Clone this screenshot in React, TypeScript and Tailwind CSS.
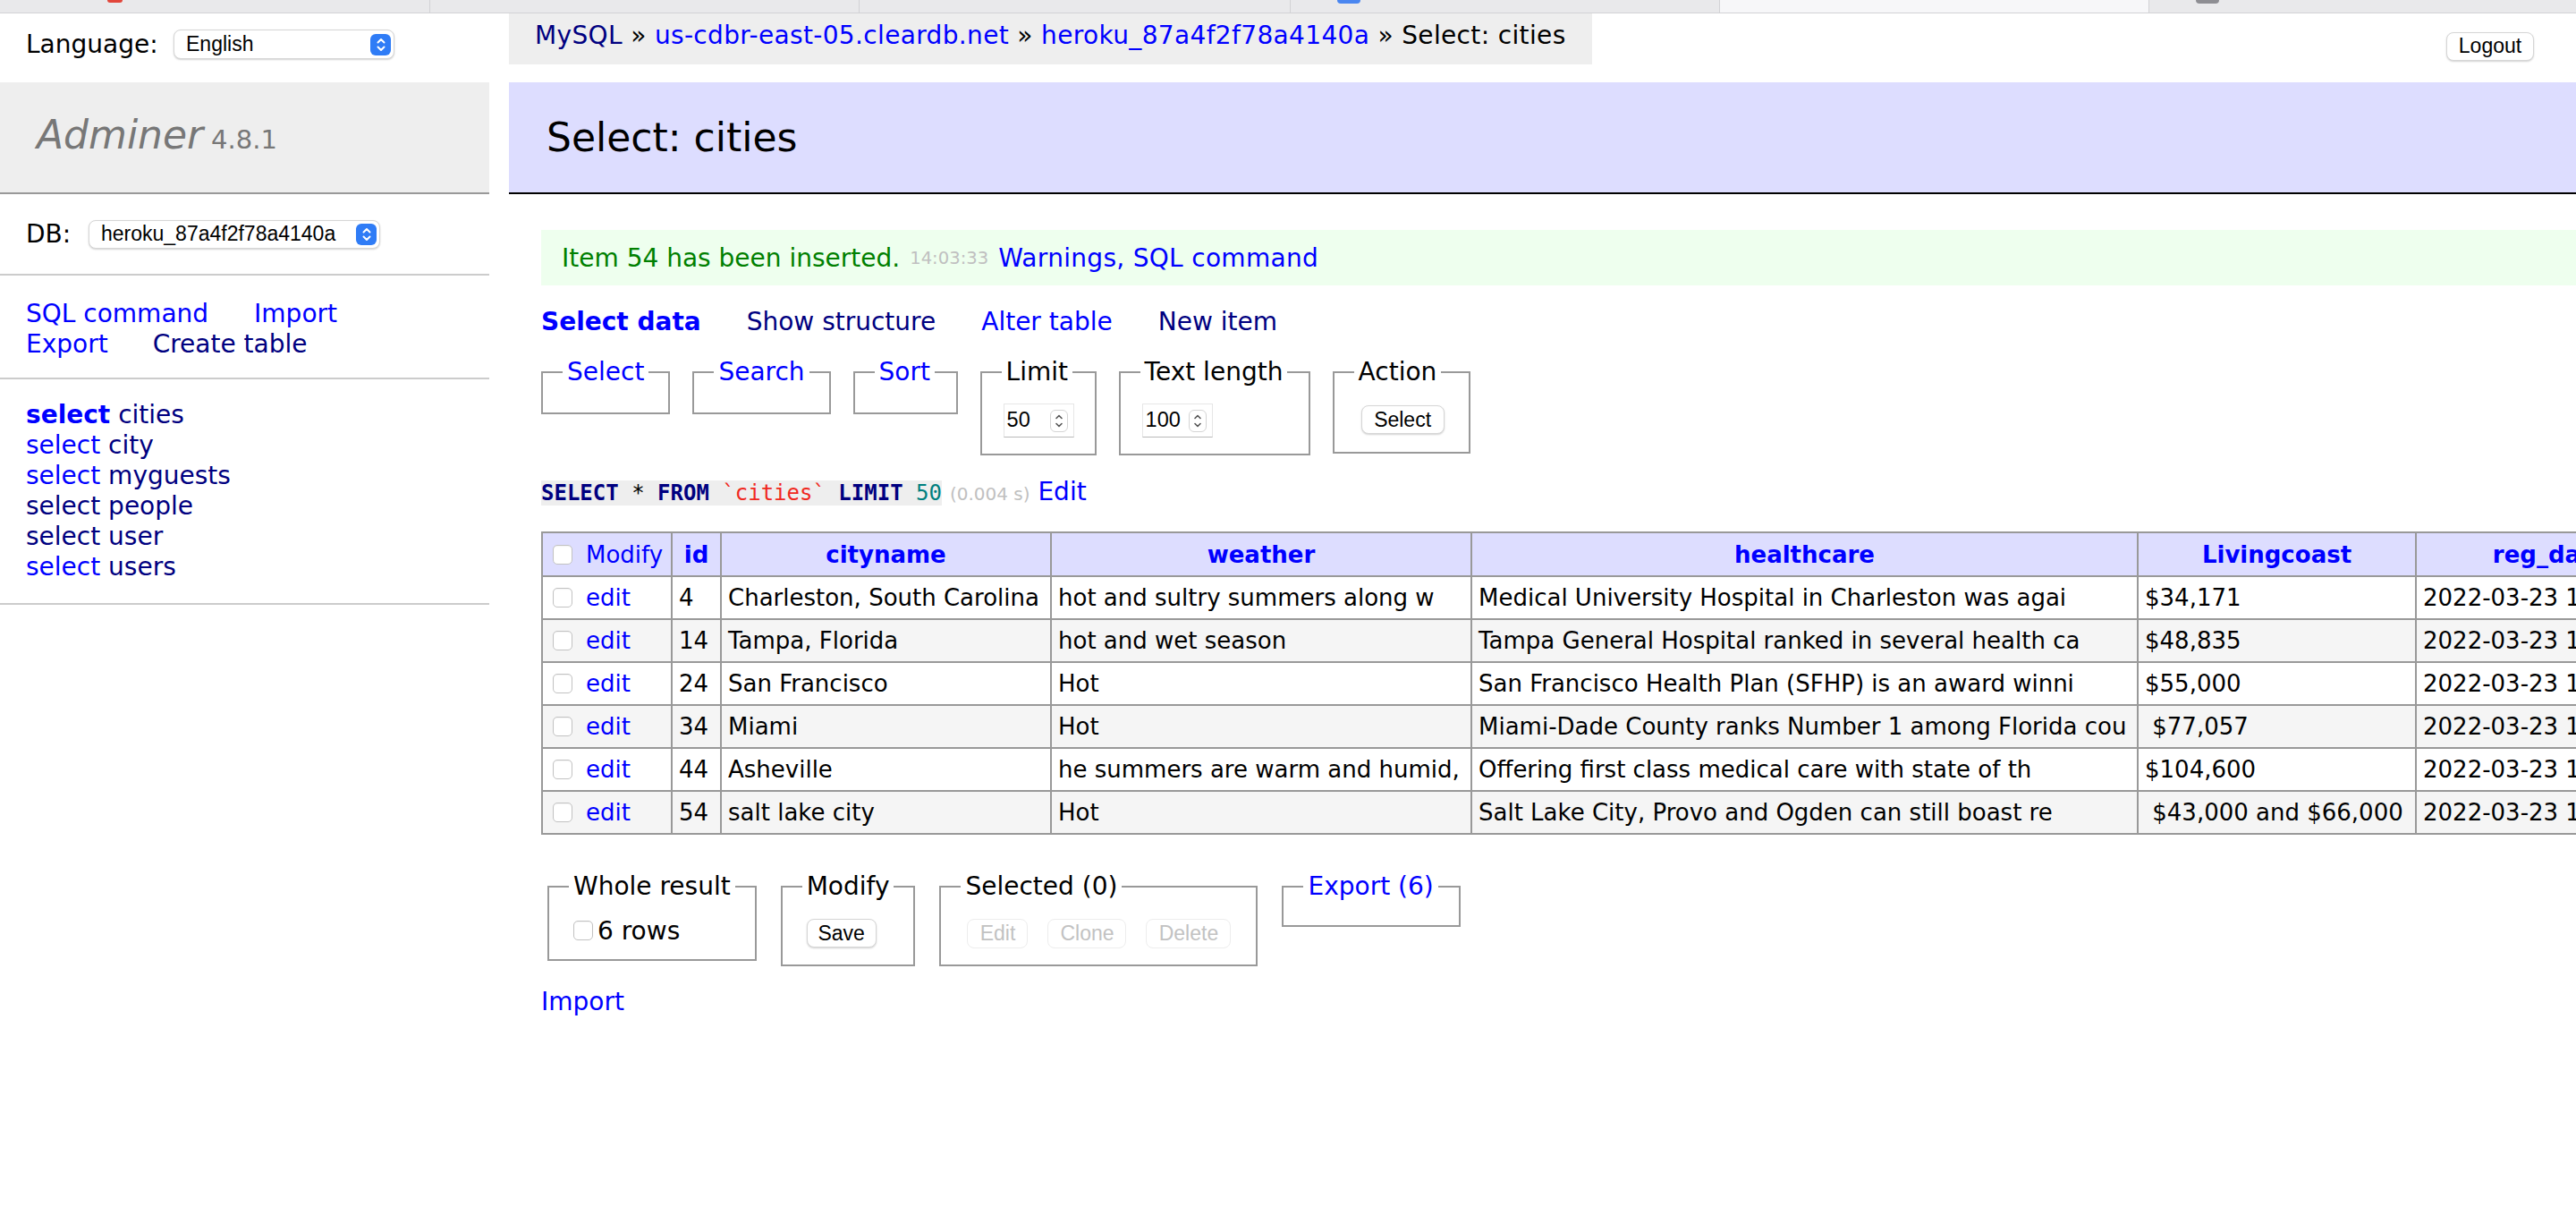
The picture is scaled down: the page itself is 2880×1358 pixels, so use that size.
import type { ReactNode } from 'react';

const rows: string[][] = [
  ['4', 'Charleston, South Carolina', 'hot and sultry summers along w', 'Medical University Hospital in Charleston was agai', '$34,171'],
  ['14', 'Tampa, Florida', 'hot and wet season', 'Tampa General Hospital ranked in several health ca', '$48,835'],
  ['24', 'San Francisco', 'Hot', 'San Francisco Health Plan (SFHP) is an award winni', '$55,000'],
  ['34', 'Miami', 'Hot', 'Miami-Dade County ranks Number 1 among Florida cou', ' $77,057'],
  ['44', 'Asheville', 'he summers are warm and humid,', 'Offering first class medical care with state of th', '$104,600'],
  ['54', 'salt lake city', 'Hot', 'Salt Lake City, Provo and Ogden can still boast re', ' $43,000 and $66,000'],
];

const tables = [
  { name: 'cities', active: true, linkVisited: false },
  { name: 'city', active: false, linkVisited: false },
  { name: 'myguests', active: false, linkVisited: false },
  { name: 'people', active: false, linkVisited: true },
  { name: 'user', active: false, linkVisited: true },
  { name: 'users', active: false, linkVisited: false },
];

function Checkbox({ className = '' }: { className?: string }) {
  return (
    <span
      className={`inline-block h-[22px] w-[22px] shrink-0 rounded-[5px] border border-[#c2c2c2] bg-white shadow-[inset_0_1px_1px_rgba(0,0,0,0.05)] ${className}`}
    />
  );
}

function MacSelect({ value, className }: { value: string; className: string }) {
  return (
    <div
      className={`flex items-center justify-between rounded-[8px] border border-[#d6d6d6] bg-white pl-[13px] pr-[3px] font-['Liberation_Sans',Arial,sans-serif] text-[23px] leading-none text-black shadow-[0_1px_2px_rgba(0,0,0,0.18)] ${className}`}
    >
      <span>{value}</span>
      <span className="flex h-[24px] w-[23px] items-center justify-center rounded-[6px] bg-[#2f7cf6]">
        <svg width="12" height="18" viewBox="0 0 12 18" fill="none" stroke="white" strokeWidth="2" strokeLinecap="round" strokeLinejoin="round">
          <path d="M2.5 6.5 6 3l3.5 3.5" />
          <path d="M2.5 11.5 6 15l3.5-3.5" />
        </svg>
      </span>
    </div>
  );
}

function MacButton({ children, className = '', disabled = false }: { children: ReactNode; className?: string; disabled?: boolean }) {
  return (
    <span
      className={`inline-flex items-center justify-center rounded-[8px] border bg-white font-['Liberation_Sans',Arial,sans-serif] text-[23px] leading-none ${
        disabled ? 'border-[#ededed] text-[#c2c2c2]' : 'border-[#d6d6d6] text-black shadow-[0_1px_2px_rgba(0,0,0,0.18)]'
      } ${className}`}
    >
      {children}
    </span>
  );
}

function NumberInput({ value }: { value: string }) {
  return (
    <div className="flex h-[38px] w-[79px] items-center border border-[#e6e6e6] border-b-[#b9b9b9] bg-white pl-[3px] pr-[6px] font-['Liberation_Sans',Arial,sans-serif] text-[23.5px] leading-none">
      <span>{value}</span>
      <span className="ml-auto flex h-[25px] w-[20px] items-center justify-center rounded-[6px] border border-[#d4d4d4] bg-white">
        <svg width="10" height="17" viewBox="0 0 10 17" fill="none" stroke="#555" strokeWidth="1.6" strokeLinecap="round" strokeLinejoin="round">
          <path d="M2 5.5 5 2.5l3 3" />
          <path d="M2 11.5 5 14.5l3-3" />
        </svg>
      </span>
    </div>
  );
}

function Box({ legend, legendClass = 'text-black', className, children }: { legend: string; legendClass?: string; className: string; children?: ReactNode }) {
  return (
    <fieldset className={`shrink-0 border-2 border-[#999] px-[22px] pt-[14px] ${className}`}>
      <legend className={`whitespace-nowrap px-[5px] leading-[35px] ${legendClass}`}>{legend}</legend>
      {children}
    </fieldset>
  );
}

function TabStrip() {
  return (
    <div className="flex h-[15px] border-b border-[#d2d2d5] bg-[#e9e9eb]">
      <div className="w-[481px] border-r border-[#d2d2d5] pl-[120px]">
        <span className="block h-[3px] w-[17px] rounded-b-[4px] bg-[#e2463b]" />
      </div>
      <div className="w-[480px] border-r border-[#d2d2d5]" />
      <div className="w-[482px] border-r border-[#d2d2d5]" />
      <div className="w-[480px] border-r border-[#d2d2d5] pl-[52px]">
        <span className="block h-[4px] w-[26px] rounded-b-[6px] bg-[#4a86f0]" />
      </div>
      <div className="w-[480px] border-r border-[#d2d2d5] bg-[#f7f7f9]" />
      <div className="flex-1 pl-[52px]">
        <span className="block h-[4px] w-[26px] rounded-b-[6px] bg-[#8e8e93]" />
      </div>
    </div>
  );
}

function Sidebar() {
  return (
    <aside className="w-[547px] shrink-0">
      {/* Language */}
      <div className="flex h-[77px] items-start pl-[29px] pt-[18px]">
        <span className="w-[165px] leading-[33px]">Language:</span>
        <MacSelect value="English" className="h-[33px] w-[247px]" />
      </div>

      {/* Logo */}
      <div className="flex h-[125px] items-center border-b-2 border-[#999] bg-[#eee] pl-[41px]">
        <div className="leading-[54px] text-[#777]">
          <span className="text-[44px] italic">Adminer</span> <span className="text-[29px]">4.8.1</span>
        </div>
      </div>

      {/* DB */}
      <div className="flex h-[91px] items-center border-b-2 border-[#ccc] px-[29px]">
        <span className="w-[70px]">DB:</span>
        <MacSelect value="heroku_87a4f2f78a4140a" className="h-[32px] w-[326px]" />
      </div>

      {/* Links */}
      <div className="border-b-2 border-[#ccc] px-[29px] pb-[20px] pt-[26px] leading-[34px]">
        <div className="flex gap-[51px]">
          <span className="text-[#0000ff]">SQL command</span>
          <span className="text-[#0000ff]">Import</span>
        </div>
        <div className="flex gap-[50px]">
          <span className="text-[#0000ff]">Export</span>
          <span className="text-[#000080]">Create table</span>
        </div>
      </div>

      {/* Tables */}
      <ul className="border-b-2 border-[#ccc] px-[29px] py-[23px] leading-[34px]">
        {tables.map(t => (
          <li key={t.name} className="whitespace-nowrap">
            <span className={`${t.active ? 'font-bold' : ''} ${t.linkVisited ? 'text-[#000080]' : 'text-[#0000ff]'}`}>select</span>{' '}
            <span className="text-[#000080]">{t.name}</span>
          </li>
        ))}
      </ul>
    </aside>
  );
}

function DataTable() {
  const cell = 'border-2 border-[#999] px-[7px] whitespace-pre overflow-hidden';
  const head = 'border-2 border-[#999] px-[7px] text-center font-bold text-[#0000ff] whitespace-nowrap';
  return (
    <table className="mt-[24px] w-[2395px] table-fixed border-collapse text-[26px] leading-[32px]">
      <colgroup>
        <col className="w-[145px]" />
        <col className="w-[55px]" />
        <col className="w-[369px]" />
        <col className="w-[470px]" />
        <col className="w-[745px]" />
        <col className="w-[311px]" />
        <col className="w-[300px]" />
      </colgroup>
      <thead>
        <tr className="h-[49px] bg-[#ddf]">
          <td className="border-2 border-[#999] pl-[11px]">
            <div className="flex items-center gap-[15px]">
              <Checkbox />
              <span className="text-[#0000ff]">Modify</span>
            </div>
          </td>
          <th className={head}>id</th>
          <th className={head}>cityname</th>
          <th className={head}>weather</th>
          <th className={head}>healthcare</th>
          <th className={head}>Livingcoast</th>
          <th className={head}>reg_date</th>
        </tr>
      </thead>
      <tbody>
        {rows.map((r, i) => (
          <tr key={r[0]} className={`h-[48px] ${i % 2 === 1 ? 'bg-[#f5f5f5]' : 'bg-white'}`}>
            <td className="border-2 border-[#999] pl-[11px]">
              <div className="flex items-center gap-[15px]">
                <Checkbox />
                <span className="text-[#0000ff]">edit</span>
              </div>
            </td>
            {r.map((v, j) => (
              <td key={j} className={cell}>
                {v}
              </td>
            ))}
            <td className={cell}>2022-03-23 14:03:33</td>
          </tr>
        ))}
      </tbody>
    </table>
  );
}

export default function App() {
  return (
    <div className="h-[1358px] w-[2880px] overflow-hidden bg-white font-['DejaVu_Sans',Verdana,sans-serif] text-[28px] leading-[35px] text-black">
      <TabStrip />
      <div className="flex">
        <Sidebar />

        <main className="ml-[22px] min-w-0 flex-1 overflow-hidden">
          {/* Breadcrumb + logout */}
          <div className="flex h-[77px] items-start justify-between">
            <div className="h-[57px] whitespace-nowrap bg-[#eee] px-[29px] leading-[50px] tracking-[0.35px]">
              <span className="text-[#000080]">MySQL</span> » <span className="text-[#0000ff]">us-cdbr-east-05.cleardb.net</span> »{' '}
              <span className="text-[#0000ff]">heroku_87a4f2f78a4140a</span> » Select: cities
            </div>
            <div className="pr-[47px] pt-[17px]">
              <MacButton className="h-[32px] w-[98px]">Logout</MacButton>
            </div>
          </div>

          {/* Title */}
          <h2 className="flex h-[125px] items-center border-b-2 border-black bg-[#ddf] pl-[42px] text-[44px] leading-[54px]">Select: cities</h2>

          <div className="pl-[36px]">
            {/* Message */}
            <div className="mt-[40px] flex h-[62px] items-center whitespace-nowrap bg-[#efe] pl-[23px]">
              <span className="text-[#008000]">Item 54 has been inserted.</span>
              <span className="ml-[11px] text-[19.6px] text-[#c0c0c0]">14:03:33</span>
              <span className="ml-[11px] tracking-[0.3px] text-[#0000ff]">Warnings, SQL command</span>
            </div>

            {/* Nav links */}
            <div className="mt-[23px] flex gap-[51px] whitespace-nowrap">
              <span className="font-bold text-[#0000ff]">Select data</span>
              <span className="text-[#000080]">Show structure</span>
              <span className="text-[#0000ff]">Alter table</span>
              <span className="text-[#000080]">New item</span>
            </div>

            {/* Search form */}
            <div className="mt-[21px] flex items-start gap-[25px]">
              <Box legend="Select" legendClass="text-[#0000ff]" className="w-[143px] pb-[14px]" />
              <Box legend="Search" legendClass="text-[#0000ff]" className="w-[153px] pb-[14px]" />
              <Box legend="Sort" legendClass="text-[#0000ff]" className="w-[117px] pb-[14px]" />
              <Box legend="Limit" className="w-[130px] pb-[14px]">
                <div className="flex h-[46px] items-center pl-[2px]">
                  <NumberInput value="50" />
                </div>
              </Box>
              <Box legend="Text length" className="w-[214px] pb-[14px]">
                <div className="flex h-[46px] items-center pl-[2px]">
                  <NumberInput value="100" />
                </div>
              </Box>
              <Box legend="Action" className="w-[154px] pb-[14px]">
                <div className="flex h-[44px] items-center pl-[8px]">
                  <MacButton className="h-[32px] w-[93px]">Select</MacButton>
                </div>
              </Box>
            </div>

            {/* Query */}
            <p className="mt-[23px] whitespace-nowrap">
              <code className="bg-[#eee] font-['DejaVu_Sans_Mono',monospace] text-[24px]">
                <b className="text-[#000080]">SELECT</b> * <b className="text-[#000080]">FROM</b>{' '}
                <span className="text-[#f0281e]">`cities`</span> <b className="text-[#000080]">LIMIT</b>{' '}
                <span className="text-[#007f7f]">50</span>
              </code>{' '}
              <span className="text-[20px] text-[#c0c0c0]">(0.004 s)</span> <span className="text-[#0000ff]">Edit</span>
            </p>

            <DataTable />

            {/* Footer */}
            <div className="ml-[7px] mt-[40px] flex items-start gap-[27px]">
              <Box legend="Whole result" className="w-[231px] pb-[14px]">
                <div className="flex h-[36px] items-center gap-[5px] pl-[5px]">
                  <Checkbox />
                  <span>6 rows</span>
                </div>
              </Box>
              <Box legend="Modify" className="w-[147px] pb-[14px]">
                <div className="flex h-[42px] items-center pl-[5px]">
                  <MacButton className="h-[32px] w-[78px]">Save</MacButton>
                </div>
              </Box>
              <Box legend="Selected (0)" className="w-[356px] pb-[14px]">
                <div className="flex h-[42px] items-center gap-[22px] pl-[7px]">
                  <MacButton disabled className="h-[33px] w-[68px]">Edit</MacButton>
                  <MacButton disabled className="h-[33px] w-[88px]">Clone</MacButton>
                  <MacButton disabled className="h-[33px] w-[95px]">Delete</MacButton>
                </div>
              </Box>
              <Box legend="Export (6)" legendClass="text-[#0000ff]" className="w-[200px] pb-[12px]" />
            </div>

            <p className="mt-[22px] text-[#0000ff]">Import</p>
          </div>
        </main>
      </div>
    </div>
  );
}
